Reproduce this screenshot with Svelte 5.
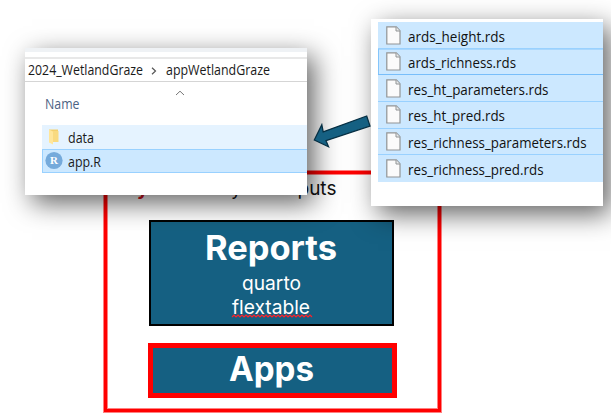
<script>
  const files = [
    { name: 'ards_height.rds', width: 97 },
    { name: 'ards_richness.rds', width: 108, focused: true },
    { name: 'res_ht_parameters.rds', width: 140.5 },
    { name: 'res_ht_pred.rds', width: 97 },
    { name: 'res_richness_parameters.rds', width: 178.5 },
    { name: 'res_richness_pred.rds', width: 135.5 }
  ];
</script>

{#snippet label(text, width, size = 14)}
  <svg class="label" {width} height="20" style:font-size="{size}px">
    <text x="0" y="15" textLength={width} lengthAdjust="spacingAndGlyphs">{text}</text>
  </svg>
{/snippet}

<main>
  <section class="frame">
    <p class="caption"><b>y</b><span class="by">y</span><span class="puts">puts</span></p>
    <div class="card reports">
      <h2>{@render label('Reports', 132, 33.5)}</h2>
      <div class="sub">{@render label('quarto', 59, 19)}</div>
      <div class="sub">{@render label('flextable', 78, 19)}</div>
      <svg class="squiggle" width="80" height="4">
        <path d="M0 3 l2 -2 l2 2 l2 -2 l2 2 l2 -2 l2 2 l2 -2 l2 2 l2 -2 l2 2 l2 -2 l2 2 l2 -2 l2 2 l2 -2 l2 2 l2 -2 l2 2 l2 -2 l2 2 l2 -2 l2 2 l2 -2 l2 2 l2 -2 l2 2 l2 -2 l2 2 l2 -2 l2 2 l2 -2 l2 2 l2 -2 l2 2 l2 -2 l2 2 l2 -2 l2 2 l2 -2 l2 2" />
      </svg>
    </div>
    <div class="card apps"><h2>{@render label('Apps', 85, 33.5)}</h2></div>
  </section>

  <section class="window explorer">
    <div class="strip"></div>
    <nav>
      {@render label('2024_WetlandGraze', 115)}
      <svg class="chevron" width="6" height="8"><path d="M1 .7 L4.5 4 L1 7.3" /></svg>
      {@render label('appWetlandGraze', 104)}
    </nav>
    <header>
      <svg class="sort" width="10" height="6"><path d="M1 5 L5 1.2 L9 5" /></svg>
      {@render label('Name', 34.5)}
    </header>
    <div class="item hover">
      <svg class="icon" width="18" height="18" viewBox="0 0 18 18">
        <path d="M4 1.5 h9 v12 h-9z" fill="#f3d06e" />
        <path d="M4 1.5 L8 3.5 V16.5 L4 14.5z" fill="#ffe69b" />
        <path d="M8 3 h5.5 v11 h-5.5z" fill="#f9da80" />
      </svg>
      {@render label('data', 26)}
    </div>
    <div class="item selected">
      <svg class="icon" width="18" height="18" viewBox="0 0 18 18">
        <circle cx="9" cy="8.5" r="8.6" fill="#75aadb" />
        <text x="9" y="12.2" class="r">R</text>
      </svg>
      {@render label('app.R', 33)}
    </div>
  </section>

  <section class="window list">
    {#each files as file}
      <div class="file" class:focused={file.focused}>
        <svg class="page" width="15" height="19" viewBox="0 0 15 19">
          <path d="M.8 .8 H10.3 L14 4.8 V18 H.8z" fill="#fbfbfb" stroke="#919495" stroke-width="1.2" />
          <path d="M10 1 V5 H14" fill="#e8eaeb" stroke="#919495" />
        </svg>
        {@render label(file.name, file.width)}
      </div>
    {/each}
  </section>

  <svg class="arrow" width="60" height="36" viewBox="312 114 60 36">
    <path d="M314.3 140 L321.8 124.8 L323.2 131.8 L366.7 116 L370 126 L326 140.7 L328.5 146.8z" />
  </svg>
</main>

<style>
  :global(body) { margin: 0; background: #fff; }
  main {
    position: relative;
    width: 611px;
    height: 414px;
    overflow: hidden;
    background: #fff;
    font-family: "Open Sans", "Noto Sans", sans-serif;
    color: #1a1a1a;
  }
  svg { display: block; flex: none; overflow: visible; }
  .label { fill: currentColor; }
  .frame {
    position: absolute;
    left: 104px;
    top: 171px;
    width: 337px;
    height: 241px;
    box-sizing: border-box;
    border: 3px solid red;
    box-shadow: 0 0 0 1px #ff8080, inset 0 0 0 1px #ff8080;
    font-family: Inter, sans-serif;
    display: flex;
    flex-direction: column;
    align-items: center;
  }
  .caption {
    position: relative;
    align-self: stretch;
    flex: none;
    height: 46px;
    margin: 0;
    font-size: 19px;
    line-height: 24px;
    color: #111;
  }
  .caption b, .caption span { position: absolute; top: 3px; }
  .caption b { left: 30px; color: #d51220; }
  .caption .by { left: 124px; }
  .caption .puts { left: 190.5px; }
  .card {
    box-sizing: border-box;
    background: #156082;
    color: #fff;
    display: flex;
    flex-direction: column;
    align-items: center;
    flex: none;
    position: relative;
  }
  h2 { margin: 0; font-weight: 700; }
  .reports {
    width: 245px;
    height: 106px;
    border: 2px solid #000;
    padding: 23px 1px 0 0;
    left: -1px;
  }
  .reports h2 { height: 30px; }
  .sub { height: 25px; }
  .squiggle { position: absolute; left: 81px; top: 92px; fill: none; stroke: #ff2028; stroke-width: 1.2; }
  .apps {
    width: 249px;
    height: 55px;
    margin-top: 17px;
    border: 5px solid red;
    padding: 18px 3px 0 0;
  }
  .window {
    position: absolute;
    background: #fff;
    box-sizing: border-box;
    box-shadow: 7px 8px 25px rgba(0, 0, 0, 0.62);
  }
  .explorer { left: 25px; top: 48px; width: 282px; height: 147px; }
  .strip { height: 4px; margin-bottom: 5px; background: #eff2f5; }
  nav {
    height: 25px;
    box-sizing: border-box;
    border-top: 2px solid #e8e8e8;
    border-bottom: 1px solid #d5d5d5;
    padding: 1px 0 0 2.5px;
    display: flex;
  }
  .chevron { margin: 7px 9px 0 8.5px; fill: none; stroke: #555; stroke-width: 1.2; }
  header { height: 43px; box-sizing: border-box; padding: 12px 0 0 19.5px; color: #4c6283; }
  .sort { position: absolute; left: 150px; top: 42px; fill: none; stroke: #777; }
  .item {
    display: flex;
    box-sizing: border-box;
    margin-left: 17px;
    height: 24px;
    gap: 5px;
    padding: 2.5px 0 0 3px;
  }
  .hover { background: #e5f3ff; }
  .selected { background: #cce8ff; border: 1px solid #99d1ff; border-right: 0; padding: 1.5px 0 0 2px; }
  .r { font: bold 11px "Liberation Serif", serif; fill: #fff; text-anchor: middle; }
  .list { left: 371px; top: 19px; width: 232px; height: 187px; padding: 3px 0 0 7px; }
  .file {
    display: flex;
    box-sizing: border-box;
    height: 26.67px;
    padding: 3.5px 0 0 7.5px;
    gap: 7px;
    background: #cce8ff;
    border-bottom: 1px solid #99d1ff;
    color: #111;
  }
  .file:last-child { border-bottom: 0; }
  .focused { box-shadow: inset 1px 0 #84c5fb, inset 0 1px #a9d7fd; border-bottom-color: #78befa; }
  .file .label { margin-top: 1px; }
  .arrow { position: absolute; left: 312px; top: 114px; }
  .arrow path { fill: #156082; stroke: #062f43; stroke-width: 1.3; }
</style>
